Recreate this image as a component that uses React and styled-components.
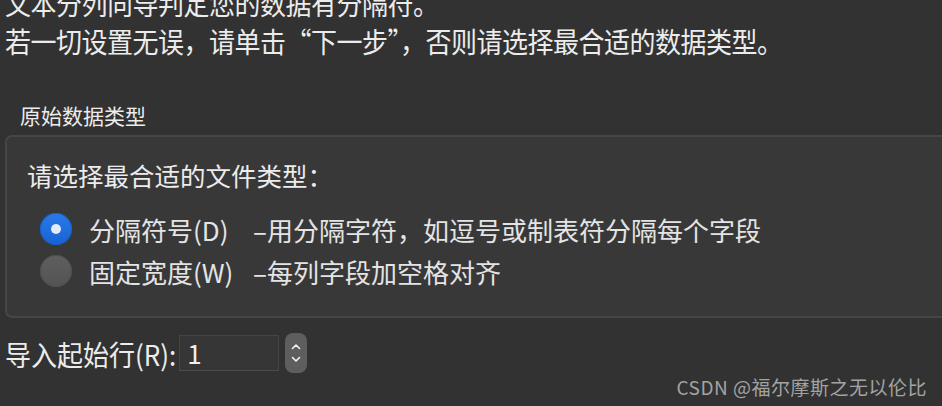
import React from 'react';
import styled, { createGlobalStyle } from 'styled-components';

const Global = createGlobalStyle`
    html {
        overflow: hidden;
    }
    body {
        margin: 0;
        padding: 0;
        background: #323232;
        font-family: "Noto Sans CJK SC", "Noto Sans", sans-serif;
        color: #ececec;
    }
`;

const Page = styled.div`
    width: 942px;
    margin-top: -16px;
    padding-left: 5px;
    box-sizing: border-box;
`;

const Intro = styled.div`
    font-size: 26px;
    line-height: 38px;
    white-space: nowrap;
    letter-spacing: -0.5px;
`;

const IntroLine = styled.div`
    transform: scaleY(1.08);
    transform-origin: left center;
`;

const GroupTitle = styled.div`
    margin: 40px 0 0 15px;
    font-size: 21px;
    line-height: 30px;
    height: 30px;
`;

const GroupBox = styled.div`
    margin-top: 5px;
    margin-right: -20px;
    height: 183px;
    box-sizing: border-box;
    background: #383838;
    border: 2px solid #464646;
    border-radius: 7px;
    padding: 22px 0 0 20px;
`;

const Prompt = styled.div`
    font-size: 25.5px;
    line-height: 32px;
`;

const Options = styled.div`
    margin: 17px 0 0 13px;
    display: grid;
    grid-template-columns: 32px 147px auto;
    grid-auto-rows: 42px;
    align-items: center;
    column-gap: 17px;
`;

const Radio = styled.span`
    width: 32px;
    height: 32px;
    border-radius: 50%;
    display: flex;
    align-items: center;
    justify-content: center;
    background: ${p => p.checked
        ? 'linear-gradient(#2a7ae6, #1762d4)'
        : 'linear-gradient(#5f5f5f, #535353)'};
    box-shadow: inset 0 0 0 1px ${p => p.checked ? '#1b5fc4' : '#4e4e4e'};
    &::after {
        content: '';
        display: ${p => p.checked ? 'block' : 'none'};
        width: 10px;
        height: 10px;
        border-radius: 50%;
        background: #e2ebf8;
    }
`;

const OptionLabel = styled.span`
    font-size: 26px;
    color: #e4e4e4;
    white-space: nowrap;
`;

const OptionDesc = styled(OptionLabel)`
    margin-left: 0;
`;

const StartRow = styled.div`
    margin-top: 15px;
    height: 40px;
    display: flex;
    align-items: center;
`;

const StartLabel = styled.span`
    font-size: 26px;
    white-space: nowrap;
    display: inline-block;
    transform: scaleY(1.08);
`;

const NumberBox = styled.div`
    margin-left: 3px;
    width: 100px;
    height: 36px;
    box-sizing: border-box;
    background: #363636;
    border: 1px solid #454545;
    border-bottom-color: #4c4c4c;
    font-size: 26px;
    line-height: 34px;
    padding-left: 7px;
    color: #f0f0f0;
`;

const Spinner = styled.div`
    margin-left: 6px;
    width: 22px;
    height: 40px;
    border-radius: 8px;
    background: #5e5e5e;
    display: flex;
    flex-direction: column;
    align-items: center;
    justify-content: center;
    gap: 6px;
`;

const Watermark = styled.div`
    margin-top: 2px;
    padding-right: 15px;
    text-align: right;
    font-size: 19px;
    line-height: 24px;
    color: #a3a3a3;
    white-space: nowrap;
    letter-spacing: 0.5px;
`;

const Chevron = ({ up }) => (
    <svg width="10" height="7" viewBox="0 0 10 7">
        <polyline
            points={up ? '1.5,5.5 5,2 8.5,5.5' : '1.5,1.5 5,5 8.5,1.5'}
            fill="none"
            stroke="#f2f2f2"
            strokeWidth="1.6"
            strokeLinecap="round"
            strokeLinejoin="round"
        />
    </svg>
);

const options = [
    { label: '分隔符号(D)', desc: '–用分隔字符，如逗号或制表符分隔每个字段', checked: true },
    { label: '固定宽度(W)', desc: '–每列字段加空格对齐', checked: false },
];

export default function App() {
    return (
        <>
            <Global />
            <Page>
                <Intro>
                    <IntroLine>文本分列向导判定您的数据有分隔符。</IntroLine>
                    <IntroLine>若一切设置无误，请单击“下一步”，否则请选择最合适的数据类型。</IntroLine>
                </Intro>
                <GroupTitle>原始数据类型</GroupTitle>
                <GroupBox>
                    <Prompt>请选择最合适的文件类型：</Prompt>
                    <Options>
                        {options.map(o => (
                            <React.Fragment key={o.label}>
                                <Radio checked={o.checked} />
                                <OptionLabel>{o.label}</OptionLabel>
                                <OptionDesc>{o.desc}</OptionDesc>
                            </React.Fragment>
                        ))}
                    </Options>
                </GroupBox>
                <StartRow>
                    <StartLabel>导入起始行(R):</StartLabel>
                    <NumberBox>1</NumberBox>
                    <Spinner>
                        <Chevron up />
                        <Chevron />
                    </Spinner>
                </StartRow>
                <Watermark>CSDN @福尔摩斯之无以伦比</Watermark>
            </Page>
        </>
    );
}
